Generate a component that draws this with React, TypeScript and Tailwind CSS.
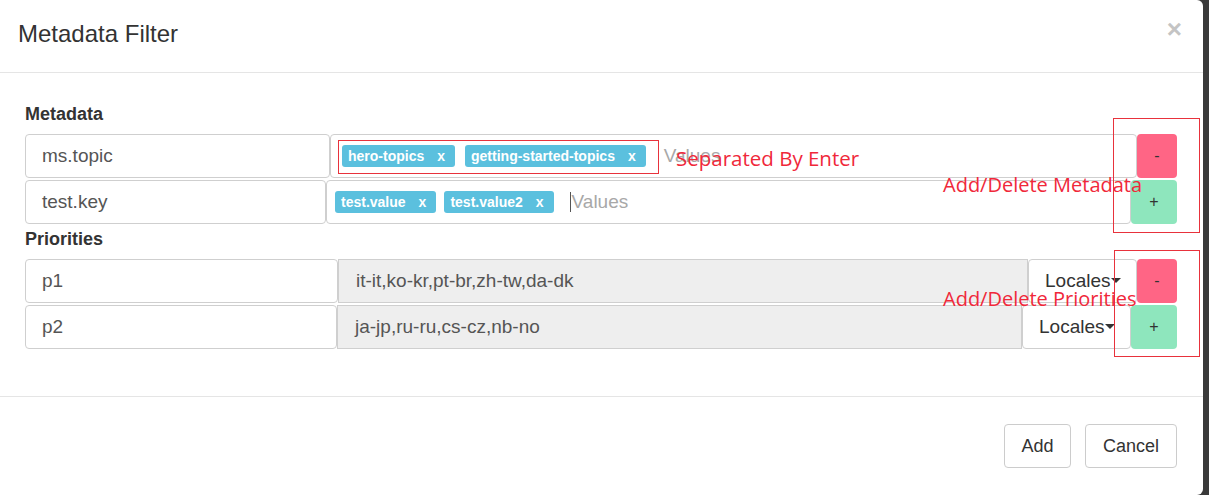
import React from "react";

const font = { fontFamily: '"Liberation Sans", Arial, sans-serif' };
const anno = { fontFamily: '"Open Sans", "Liberation Sans", sans-serif' };

function Chip({ label }: { label: string }) {
  return (
    <span className="inline-flex h-[22px] items-center rounded-[3px] bg-[#5bc0de] pl-[6px] pr-[10px] text-[14px] font-bold text-white">
      {label}
      <span className="ml-[13px]">x</span>
    </span>
  );
}

function KeyInput({ w, text }: { w: string; text: string }) {
  return (
    <div className={`${w} flex h-full shrink-0 items-center rounded-[4px] border border-[#cfcfcf] pl-[16px] text-[19px] text-[#555]`}>
      {text}
    </div>
  );
}

function RowBtn({ kind, w }: { kind: "-" | "+"; w: string }) {
  return (
    <div
      className={`${w} ${kind === "-" ? "bg-[#ff6585]" : "bg-[#8ee6bd]"} flex h-full shrink-0 items-center justify-center rounded-[4px] text-[16px] text-[#333]`}
    >
      {kind}
    </div>
  );
}

function Caret() {
  return <span className="mb-[2px] inline-block h-0 w-0 border-l-[5px] border-r-[5px] border-t-[5px] border-l-transparent border-r-transparent border-t-[#333]" />;
}

export default function App() {
  return (
    <div className="flex h-[495px] w-[1209px] bg-[#3a3a3a]" style={font}>
      <div className="relative flex h-full w-[1203px] flex-col rounded-r-[6px] bg-white text-[#333]">
        {/* header */}
        <div className="flex h-[73px] shrink-0 items-center justify-between border-b border-[#e5e5e5] pl-[18px] pr-[21px]">
          <h1 className="mt-[-5px] text-[24px] text-[#333]">Metadata Filter</h1>
          <span className="mt-[-14px] text-[26px] font-bold leading-none text-[#c4c4c4]">×</span>
        </div>

        {/* body */}
        <div className="flex flex-col pl-[25px] pr-[26px] pt-[31px] pb-[47px]">
          <div className="h-[20px] text-[18px] font-bold leading-[20px] text-[#333]">Metadata</div>

          <div className="mt-[10px] flex h-[44px] w-[1152px]">
            <KeyInput w="w-[305px]" text="ms.topic" />
            <div className="flex h-full flex-1 items-center gap-[10px] rounded-[4px] border border-[#cfcfcf] pl-[11px]">
              <Chip label="hero-topics" />
              <Chip label="getting-started-topics" />
              <span className="ml-[8px] text-[19px] text-[#a8a8a8]">Values</span>
            </div>
            <RowBtn kind="-" w="w-[40px]" />
          </div>

          <div className="mt-[2px] flex h-[44px] w-[1152px]">
            <KeyInput w="w-[301px]" text="test.key" />
            <div className="flex h-full flex-1 items-center gap-[8px] rounded-[4px] border border-[#cfcfcf] pl-[8px]">
              <Chip label="test.value" />
              <Chip label="test.value2" />
              <span className="ml-[8px] flex items-center text-[19px] text-[#a8a8a8]">
                <span className="mr-[1px] inline-block h-[20px] w-[1px] bg-[#555]" />
                Values
              </span>
            </div>
            <RowBtn kind="+" w="w-[46px]" />
          </div>

          <div className="mt-[5px] h-[20px] text-[18px] font-bold leading-[20px] text-[#333]">Priorities</div>

          <div className="mt-[10px] flex h-[44px] w-[1152px]">
            <KeyInput w="w-[313px]" text="p1" />
            <div className="flex h-full w-[690px] shrink-0 items-center border border-[#cfcfcf] bg-[#eeeeee] pl-[17px] text-[19px] text-[#555]">
              it-it,ko-kr,pt-br,zh-tw,da-dk
            </div>
            <div className="flex h-full w-[109px] shrink-0 items-center rounded-[4px] border border-[#cfcfcf] pl-[16px] text-[19px] text-[#333]">
              Locales
              <Caret />
            </div>
            <RowBtn kind="-" w="w-[40px]" />
          </div>

          <div className="mt-[2px] flex h-[44px] w-[1152px]">
            <KeyInput w="w-[312px]" text="p2" />
            <div className="flex h-full w-[685px] shrink-0 items-center border border-[#cfcfcf] bg-[#eeeeee] pl-[17px] text-[19px] text-[#555]">
              ja-jp,ru-ru,cs-cz,nb-no
            </div>
            <div className="flex h-full w-[109px] shrink-0 items-center rounded-[4px] border border-[#cfcfcf] pl-[16px] text-[19px] text-[#333]">
              Locales
              <Caret />
            </div>
            <RowBtn kind="+" w="w-[46px]" />
          </div>
        </div>

        {/* footer */}
        <div className="flex flex-1 items-start justify-end gap-[14px] border-t border-[#e5e5e5] pr-[26px] pt-[27px]">
          <button className="h-[44px] w-[67px] rounded-[4px] border border-[#cccccc] text-[18px] text-[#333]">Add</button>
          <button className="h-[44px] w-[92px] rounded-[4px] border border-[#cccccc] text-[18px] text-[#333]">Cancel</button>
        </div>

        {/* annotations */}
        <div className="pointer-events-none absolute left-[338px] top-[140px] h-[34px] w-[321px] border border-[#e8323c]" />
        <div className="pointer-events-none absolute left-[1113px] top-[118px] h-[115px] w-[87px] border border-[#e8323c]" />
        <div className="pointer-events-none absolute left-[1114px] top-[250px] h-[107px] w-[86px] border border-[#e8323c]" />
        <div className="pointer-events-none absolute left-[676px] top-[144px] text-[20.5px] leading-[28px] text-[#f0283a]" style={anno}>
          Separated By Enter
        </div>
        <div className="pointer-events-none absolute left-[943px] top-[171px] text-[20px] leading-[28px] text-[#f0283a]" style={anno}>
          Add/Delete Metadata
        </div>
        <div className="pointer-events-none absolute left-[943px] top-[285px] text-[20px] leading-[28px] text-[#f0283a]" style={anno}>
          Add/Delete Priorities
        </div>
      </div>
    </div>
  );
}
